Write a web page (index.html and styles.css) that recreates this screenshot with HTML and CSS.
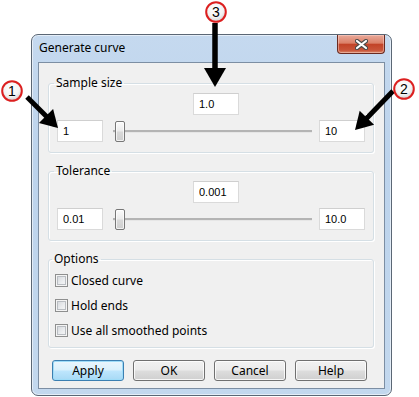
FILE: index.html
```html
<!DOCTYPE html>
<html lang="en">
<head>
    <meta charset="UTF-8">
    <meta name="viewport" content="width=device-width, initial-scale=1.0">
    <title>Generate curve</title>
    <link rel="stylesheet" href="styles.css">
</head>
<body>
    <div class="stage">
        <div class="window">
            <div class="titlebar">
                <span class="title">Generate curve</span>
                <div class="close-btn">
                    <svg width="13" height="11" viewBox="0 0 13 11">
                        <path d="M2 2 L11 9 M11 2 L2 9" stroke="#4a4a4a" stroke-width="4.2" stroke-linecap="round"/>
                        <path d="M2 2 L11 9 M11 2 L2 9" stroke="#fff" stroke-width="2.2" stroke-linecap="round"/>
                    </svg>
                </div>
            </div>
            <div class="client">
                <fieldset class="group">
                    <legend>Sample size</legend>
                    <div class="row">
                        <input type="text" class="field field-mid" value="1.0">
                    </div>
                    <div class="row">
                        <input type="text" class="field" value="1">
                        <div class="slider"><div class="thumb"></div></div>
                        <input type="text" class="field" value="10">
                    </div>
                </fieldset>

                <fieldset class="group">
                    <legend>Tolerance</legend>
                    <div class="row">
                        <input type="text" class="field field-mid" value="0.001">
                    </div>
                    <div class="row">
                        <input type="text" class="field" value="0.01">
                        <div class="slider"><div class="thumb"></div></div>
                        <input type="text" class="field" value="10.0">
                    </div>
                </fieldset>

                <fieldset class="group options">
                    <legend>Options</legend>
                    <label class="check"><span class="box"></span>Closed curve</label>
                    <label class="check"><span class="box"></span>Hold ends</label>
                    <label class="check"><span class="box"></span>Use all smoothed points</label>
                </fieldset>

                <div class="buttons">
                    <button class="btn btn-default">Apply</button>
                    <button class="btn">OK</button>
                    <button class="btn">Cancel</button>
                    <button class="btn">Help</button>
                </div>
            </div>
        </div>

        <!-- numbered callouts drawn over the screenshot -->
        <svg class="callouts" width="419" height="397" viewBox="0 0 419 397">
            <defs>
                <radialGradient id="bubble" cx="45%" cy="35%" r="70%">
                    <stop offset="0" stop-color="#ffffff"/>
                    <stop offset="0.6" stop-color="#f3f3f3"/>
                    <stop offset="1" stop-color="#c9c9c9"/>
                </radialGradient>
            </defs>

            <line x1="27" y1="97" x2="47" y2="117" stroke="#000" stroke-width="5"/>
            <polygon points="58,128 38.9,123.1 53.1,108.9" fill="#000"/>

            <line x1="215" y1="23" x2="215" y2="70" stroke="#000" stroke-width="5.5"/>
            <polygon points="204,68 226,68 215,87" fill="#000"/>

            <line x1="393" y1="91" x2="366" y2="119" stroke="#000" stroke-width="5"/>
            <polygon points="355,130 374.1,124.8 359.7,110.8" fill="#000"/>

            <circle cx="12" cy="91" r="9.8" fill="url(#bubble)" stroke="#dc1f1f" stroke-width="2"/>
            <text x="12" y="96" class="num">1</text>

            <circle cx="216" cy="12" r="9.8" fill="url(#bubble)" stroke="#dc1f1f" stroke-width="2"/>
            <text x="216" y="17" class="num">3</text>

            <circle cx="404" cy="89" r="9.8" fill="url(#bubble)" stroke="#dc1f1f" stroke-width="2"/>
            <text x="404" y="94" class="num">2</text>
        </svg>
    </div>
</body>
</html>
```

FILE: styles.css
```css
* {
    margin: 0;
    padding: 0;
    box-sizing: border-box;
}

body {
    background: #fff;
    font-family: 'Noto Sans', 'Open Sans', sans-serif;
    font-size: 12px;
    color: #000;
}

.stage {
    position: relative;
    width: 419px;
    height: 397px;
    overflow: hidden;
    padding: 34px 0 0 31px;
}

.window {
    width: 361px;
    height: 362px;
    border: 1px solid #5b6775;
    border-radius: 7px;
    padding: 0 6px 6px 6px;
    background: linear-gradient(to bottom, #c5d9ef 0%, #bcd3ec 35%, #c3d8ee 100%);
    box-shadow: inset 0 0 0 1px rgba(255, 255, 255, 0.55);
    display: flex;
    flex-direction: column;
}

.titlebar {
    height: 27px;
    display: flex;
    justify-content: space-between;
    align-items: flex-start;
    padding-left: 1px;
}

.title {
    padding-top: 5px;
    line-height: 16px;
    font-size: 12px;
}

.close-btn {
    width: 48px;
    height: 19px;
    border: 1px solid #6a2a20;
    border-top: none;
    border-radius: 0 0 4px 4px;
    background: linear-gradient(to bottom, #e9a99a 0%, #db8068 45%, #c24328 52%, #c9553a 85%, #d98a6c 100%);
    box-shadow: inset 0 0 0 1px rgba(255, 220, 210, 0.45);
    display: flex;
    justify-content: center;
    align-items: center;
}

.client {
    flex: 1;
    background: #f0f0f0;
    border: 1px solid #7c8ea3;
    padding: 12px 10px 0 9px;
}

.group {
    border: 1px solid #d5dfe5;
    border-radius: 3px;
    box-shadow: inset 1px 1px 0 #fff, 1px 1px 0 #fff;
    padding: 2px 8px 10px 8px;
    margin-bottom: 10px;
}

.group legend {
    line-height: 16px;
    padding: 0 2px;
    margin-left: -3px;
}

.row {
    display: flex;
    align-items: center;
    height: 22px;
}

.row + .row {
    margin-top: 5px;
}

.field {
    width: 46px;
    height: 22px;
    border: 1px solid #dadada;
    border-top-color: #cfcfcf;
    background: #fff;
    font-family: 'Liberation Sans', Arial, sans-serif;
    font-size: 11px;
    color: #000;
    padding: 0 5px;
    outline: none;
}

.field-mid {
    margin-left: 136px;
}

.slider {
    flex: 1;
    height: 22px;
    margin: 0 7px 0 10px;
    display: flex;
    align-items: center;
    background:
        linear-gradient(#b4b4b4, #b4b4b4) no-repeat 0 10px / 100% 2px,
        linear-gradient(#e6e6e6, #e6e6e6) no-repeat 0 12px / 100% 1px;
}

.thumb {
    width: 10px;
    height: 21px;
    margin-left: 2px;
    border: 1px solid #777;
    border-radius: 2px;
    background: linear-gradient(to bottom, #fbfbfb 0%, #ececec 45%, #d8d8d8 55%, #cfcfcf 100%);
    box-shadow: inset 0 0 0 1px rgba(255, 255, 255, 0.7);
}

.options {
    padding: 3px 8px 7px 6px;
    display: flex;
    flex-direction: column;
    gap: 5px;
    margin-bottom: 12px;
}

.check {
    display: flex;
    align-items: center;
    gap: 3px;
    height: 20px;
}

.box {
    width: 13px;
    height: 13px;
    border: 1px solid #8e8f8f;
    background: linear-gradient(135deg, #cfd2d7 0%, #eceef0 60%, #f8f8f8 100%);
    box-shadow: inset 0 0 0 1px #f4f4f4, inset 0 0 0 2px #b9bdc2;
}

.buttons {
    display: flex;
    gap: 9px;
    padding-left: 4px;
}

.btn {
    width: 72px;
    height: 21px;
    border: 1px solid #707070;
    border-radius: 3px;
    background: linear-gradient(to bottom, #f2f2f2 0%, #ebebeb 48%, #dddddd 52%, #cfcfcf 100%);
    box-shadow: inset 0 0 0 1px rgba(255, 255, 255, 0.8);
    font-family: 'Noto Sans', 'Open Sans', sans-serif;
    font-size: 12px;
    color: #000;
}

.btn-default {
    border-color: #3c7fb1;
    background: linear-gradient(to bottom, #eaf6fd 0%, #d9f0fc 48%, #bee6fd 52%, #a7d9f5 100%);
    box-shadow: inset 0 0 0 1px #9fdcf8;
}

.callouts {
    position: absolute;
    left: 0;
    top: 0;
    pointer-events: none;
}

.num {
    font-family: 'Liberation Sans', Arial, sans-serif;
    font-size: 14px;
    text-anchor: middle;
    fill: #000;
}
```
